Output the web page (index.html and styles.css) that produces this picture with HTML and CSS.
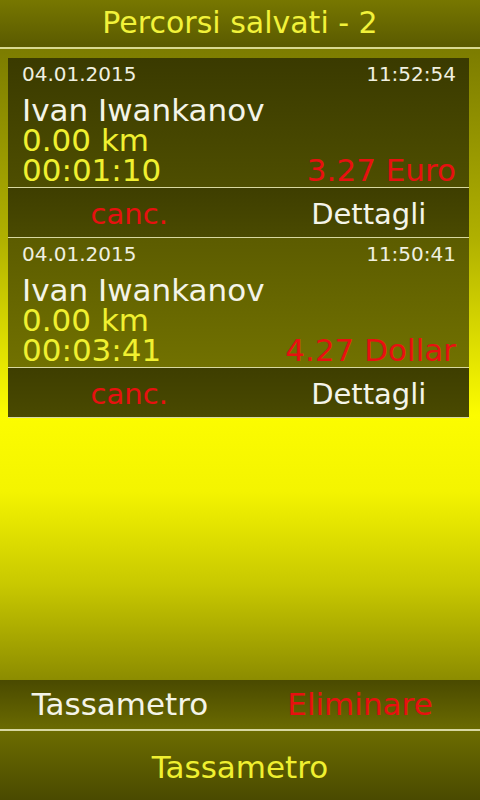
FILE: index.html
```html
<!DOCTYPE html>
<html lang="it">
<head>
    <meta charset="UTF-8">
    <meta name="viewport" content="width=device-width, initial-scale=1.0">
    <title>Percorsi salvati</title>
    <link rel="stylesheet" href="styles.css">
</head>
<body>

<div class="screen">
    <!-- Titolo -->
    <div class="title">Percorsi salvati - 2</div>

    <div class="content">
        <div class="list">
            <!-- Primo percorso -->
            <div class="trip first">
                <div class="trip-head">
                    <span>04.01.2015</span>
                    <span>11:52:54</span>
                </div>
                <div class="name">Ivan Iwankanov</div>
                <div class="km">0.00 km</div>
                <div class="last-line">
                    <span class="km">00:01:10</span>
                    <span class="price">3.27 Euro</span>
                </div>
            </div>
            <div class="actions">
                <span class="cancel">canc.</span>
                <span class="details">Dettagli</span>
            </div>

            <!-- Secondo percorso -->
            <div class="trip second">
                <div class="trip-head">
                    <span>04.01.2015</span>
                    <span>11:50:41</span>
                </div>
                <div class="name">Ivan Iwankanov</div>
                <div class="km">0.00 km</div>
                <div class="last-line">
                    <span class="km">00:03:41</span>
                    <span class="price">4.27 Dollar</span>
                </div>
            </div>
            <div class="actions">
                <span class="cancel">canc.</span>
                <span class="details">Dettagli</span>
            </div>
        </div>
    </div>

    <!-- Barra in basso -->
    <div class="bottom-row">
        <span class="white">Tassametro</span>
        <span class="red">Eliminare</span>
    </div>
    <div class="bottom-main">Tassametro</div>
</div>

</body>
</html>
```

FILE: styles.css
```css
body { margin: 0; font-family: "DejaVu Sans", Verdana, sans-serif; background: #000; }
.screen { width: 480px; height: 800px; display: flex; flex-direction: column; overflow: hidden; }
.title { height: 47px; line-height: 46px; text-align: center; font-size: 30px; color: #f2f23a; background: linear-gradient(#777700, #5a5a00); border-bottom: 2px solid #d8d890; }
.content { flex: 1; padding: 9px 11px 0 8px; background: linear-gradient(#7c7c00 0%, #b0b000 30%, #fcfc00 58%, #f4f400 70%, #c8c800 85%, #8c8c00 100%); }
.trip { padding: 4px 13px 0 14px; height: 125px; border-bottom: 1px solid #d8d8a0; }
.trip.first { background: linear-gradient(#3a3a00, #4e4e00); }
.trip.second { background: linear-gradient(#5c5c00, #717100); }
.trip-head { display: flex; justify-content: space-between; font-size: 20px; color: #f0f0e0; height: 33px; line-height: 24px; }
.name { font-size: 31px; line-height: 30px; color: #f4f4e8; }
.km { font-size: 31px; line-height: 30px; color: #f0f030; }
.last-line { display: flex; justify-content: space-between; align-items: baseline; }
.price { font-size: 31px; line-height: 30px; color: #e81010; }
.actions { display: grid; grid-template-columns: 1fr 1fr; height: 49px; line-height: 52px; font-size: 29px; text-align: center; background: linear-gradient(#3e3e00, #4a4a00); border-bottom: 1px solid #d8d8a0; }
.cancel { color: #e81010; padding-left: 12px; }
.details { color: #f4f4e8; padding-left: 30px; }
.bottom-row { display: grid; grid-template-columns: 1fr 1fr; height: 49px; line-height: 48px; font-size: 31px; text-align: center; background: linear-gradient(#4a4a00, #6a6a00); border-bottom: 2px solid #d8d8a0; }
.bottom-row .white { color: #f4f4e8; }
.bottom-row .red { color: #e81010; }
.bottom-main { height: 69px; line-height: 72px; font-size: 31px; text-align: center; color: #f0f030; background: linear-gradient(#6c6c00, #4a4a00); }
```
